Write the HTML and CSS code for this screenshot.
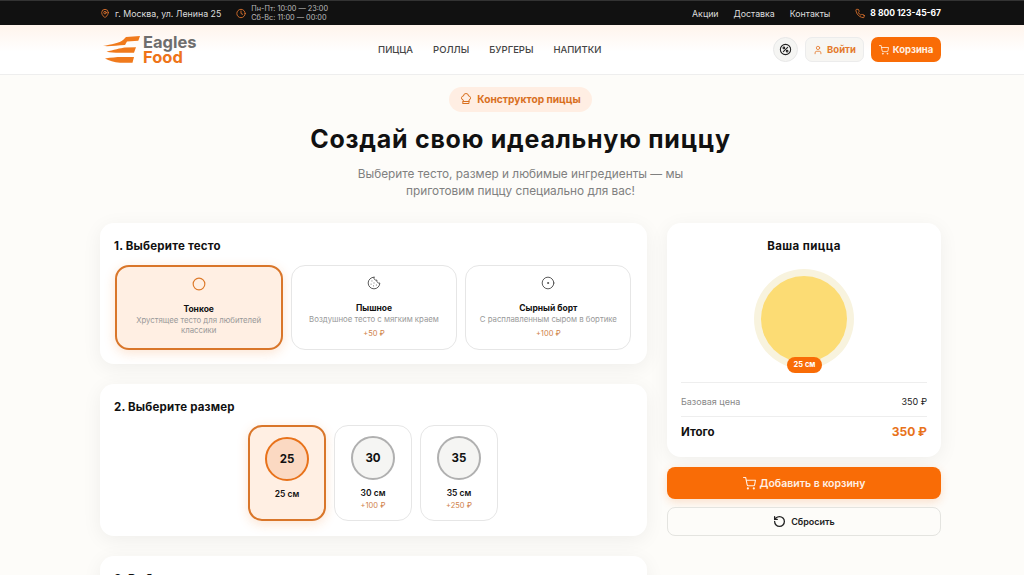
FILE: index.html
```html
<!DOCTYPE html>
<html lang="ru">
<head>
    <meta charset="UTF-8">
    <meta name="viewport" content="width=device-width, initial-scale=1.0">
    <title>Конструктор пиццы - Eagles Food</title>
    <link rel="stylesheet" href="styles.css">
</head>
<body>
    <div class="topbar">
        <div class="wrap topbar-row">
            <div class="topbar-left">
                <span class="top-item">
                    <svg class="top-icon" viewBox="0 0 24 24"><path d="M20 10c0 6-8 12-8 12s-8-6-8-12a8 8 0 0 1 16 0Z"/><circle cx="12" cy="10" r="3"/></svg>
                    г. Москва, ул. Ленина 25
                </span>
                <span class="top-item">
                    <svg class="top-icon" viewBox="0 0 24 24"><circle cx="12" cy="12" r="10"/><path d="M12 6v6l4 2"/></svg>
                    <span class="hours">Пн-Пт: 10:00 — 23:00<br>Сб-Вс: 11:00 — 00:00</span>
                </span>
            </div>
            <div class="topbar-right">
                <a href="#">Акции</a>
                <a href="#">Доставка</a>
                <a href="#">Контакты</a>
                <span class="phone">
                    <svg class="top-icon" viewBox="0 0 24 24"><path d="M22 16.900v3a2 2 0 0 1-2.200 2 19.800 19.800 0 0 1-8.600-3 19.500 19.500 0 0 1-6-6 19.800 19.800 0 0 1-3-8.700A2 2 0 0 1 4.100 2h3a2 2 0 0 1 2 1.700c.1 1 .4 1.900.7 2.800a2 2 0 0 1-.5 2.100L8.100 9.900a16 16 0 0 0 6 6l1.300-1.300a2 2 0 0 1 2.100-.4c.9.300 1.800.6 2.800.7a2 2 0 0 1 1.700 2Z"/></svg>
                    8 800 123-45-67
                </span>
            </div>
        </div>
    </div>

    <header class="header">
        <div class="wrap header-row">
            <a href="#" class="logo">
                <svg class="logo-mark" viewBox="0 0 37 28">
                    <path d="M0 10C8 8.500 17 7 20 4L23 1L37 0L35.300 4.700L24 5.500L22 9C14 9.500 7 10.500 0 10Z"/>
                    <path d="M3.500 15.700C10 14 18 12 22 11.500L33 11.300L31 16.700L20 16.700C14 17 8 16.500 3.500 15.700Z"/>
                    <path d="M2 22.500C8 21.500 14 21 18 21L31 21L29.500 26.700L17 26.700C11 26.700 6 24.500 2 22.500Z"/>
                </svg>
                <span class="logo-text"><span class="logo-top">Eagles</span><span class="logo-bottom">Food</span></span>
            </a>
            <nav class="nav">
                <a href="#">Пицца</a>
                <a href="#">Роллы</a>
                <a href="#">Бургеры</a>
                <a href="#">Напитки</a>
            </nav>
            <div class="header-actions">
                <button class="btn-round">
                    <svg viewBox="0 0 24 24"><circle cx="12" cy="12" r="9.500"/><path d="M16 8l-8 8"/><circle cx="9" cy="9" r="1.500"/><circle cx="15" cy="15" r="1.500"/></svg>
                </button>
                <button class="btn-login">
                    <svg viewBox="0 0 24 24"><path d="M19 21v-2a4 4 0 0 0-4-4H9a4 4 0 0 0-4 4v2"/><circle cx="12" cy="7" r="4"/></svg>
                    Войти
                </button>
                <button class="btn-cart">
                    <svg viewBox="0 0 24 24"><circle cx="9" cy="21" r="1"/><circle cx="20" cy="21" r="1"/><path d="M1 1h4l2.700 13.400a2 2 0 0 0 2 1.600h9.700a2 2 0 0 0 2-1.600L23 6H6"/></svg>
                    Корзина
                </button>
            </div>
        </div>
    </header>

    <main class="wrap">
        <section class="hero">
            <div class="hero-badge">
                <svg viewBox="0 0 24 24"><path d="M6 13.900A4 4 0 0 1 7 6a5 5 0 0 1 10 0 4 4 0 0 1 1 7.900V21H6Z"/><path d="M6 17h12"/></svg>
                Конструктор пиццы
            </div>
            <h1>Создай свою идеальную пиццу</h1>
            <p>Выберите тесто, размер и любимые ингредиенты — мы<br>приготовим пиццу специально для вас!</p>
        </section>

        <div class="builder">
            <div class="steps">
                <section class="card">
                    <h2>1. Выберите тесто</h2>
                    <div class="dough-list">
                        <div class="dough active">
                            <svg viewBox="0 0 24 24"><circle cx="12" cy="12" r="10"/></svg>
                            <div class="dough-name">Тонкое</div>
                            <div class="dough-desc">Хрустящее тесто для любителей классики</div>
                        </div>
                        <div class="dough">
                            <svg viewBox="0 0 24 24"><path d="M12 2a10 10 0 1 0 10 10 4 4 0 0 1-5-5 4 4 0 0 1-5-5"/><path d="M8.500 8.500h.01M16 15.500h.01M12 12h.01M11 17h.01M7 14h.01"/></svg>
                            <div class="dough-name">Пышное</div>
                            <div class="dough-desc">Воздушное тесто с мягким краем</div>
                            <div class="price-add">+50 ₽</div>
                        </div>
                        <div class="dough">
                            <svg viewBox="0 0 24 24"><circle cx="12" cy="12" r="10"/><circle cx="12" cy="12" r="1"/></svg>
                            <div class="dough-name">Сырный борт</div>
                            <div class="dough-desc">С расплавленным сыром в бортике</div>
                            <div class="price-add">+100 ₽</div>
                        </div>
                    </div>
                </section>

                <section class="card">
                    <h2>2. Выберите размер</h2>
                    <div class="size-list">
                        <div class="size active">
                            <div class="size-circle">25</div>
                            <div class="size-name">25 см</div>
                        </div>
                        <div class="size">
                            <div class="size-circle">30</div>
                            <div class="size-name">30 см</div>
                            <div class="price-add">+100 ₽</div>
                        </div>
                        <div class="size">
                            <div class="size-circle">35</div>
                            <div class="size-name">35 см</div>
                            <div class="price-add">+250 ₽</div>
                        </div>
                    </div>
                </section>

                <section class="card">
                    <h2>3. Выберите ингредиенты</h2>
                </section>
            </div>

            <aside class="side">
                <section class="card summary">
                    <h2>Ваша пицца</h2>
                    <div class="pizza">
                        <div class="pizza-base"></div>
                        <span class="pizza-size">25 см</span>
                    </div>
                    <div class="price-row">
                        <span>Базовая цена</span>
                        <span class="price-value">350 ₽</span>
                    </div>
                    <div class="total-row">
                        <span>Итого</span>
                        <span class="total-value">350 ₽</span>
                    </div>
                </section>
                <button class="btn-add">
                    <svg viewBox="0 0 24 24"><circle cx="9" cy="21" r="1"/><circle cx="20" cy="21" r="1"/><path d="M1 1h4l2.700 13.400a2 2 0 0 0 2 1.600h9.700a2 2 0 0 0 2-1.600L23 6H6"/></svg>
                    Добавить в корзину
                </button>
                <button class="btn-reset">
                    <svg viewBox="0 0 24 24"><path d="M3 12a9 9 0 1 0 9-9 9.800 9.800 0 0 0-6.700 2.700L3 8"/><path d="M3 3v5h5"/></svg>
                    Сбросить
                </button>
            </aside>
        </div>
    </main>
</body>
</html>
```

FILE: styles.css
```css
* {
    box-sizing: border-box;
}
html, body {
    height: 575px;
    overflow: hidden;
}
body {
    margin: 0;
    font-family: Inter, "Noto Sans", sans-serif;
    background-color: #fdfcf9;
    color: #111;
}
svg {
    fill: none;
    stroke: currentColor;
    stroke-width: 2;
    stroke-linecap: round;
    stroke-linejoin: round;
}
a {
    color: inherit;
    text-decoration: none;
}
button {
    font-family: inherit;
    cursor: pointer;
}
.wrap {
    width: 841px;
    margin-left: 100px;
}

/* top bar */
.topbar {
    height: 25px;
    background: #111;
    border-top: 1px solid #333;
    color: #ddd;
    font-size: 8.800px;
}
.topbar-row, .topbar-left, .top-item, .topbar-right, .phone {
    display: flex;
    align-items: center;
}
.topbar-row {
    height: 24px;
    justify-content: space-between;
}
.topbar-left {
    gap: 15px;
}
.top-item {
    gap: 5px;
}
.top-icon {
    width: 10px;
    height: 11px;
    color: #e8772e;
    flex: none;
}
.hours {
    font-size: 7.300px;
    line-height: 9.500px;
    color: #bbb;
}
.topbar-right {
    gap: 15px;
}
.phone {
    gap: 5px;
    margin-left: 10px;
    color: #fff;
    font-size: 8.500px;
    font-weight: 700;
}

/* header */
.header {
    height: 50px;
    background: linear-gradient(180deg, #fff4ec 0%, #fff 55%);
    border-bottom: 1px solid #eee;
}
.header-row {
    height: 49px;
    display: flex;
    align-items: center;
    justify-content: space-between;
}
.logo {
    display: flex;
    align-items: center;
    gap: 3px;
    margin-left: 3px;
}
.logo-mark {
    width: 37px;
    height: 28px;
    fill: #f07a1c;
    stroke: none;
}
.logo-text {
    display: flex;
    flex-direction: column;
    font-size: 16.500px;
    line-height: 15px;
    font-weight: 700;
}
.logo-top {
    color: #6e6e6e;
}
.logo-bottom {
    color: #ee7419;
}
.nav {
    display: flex;
    gap: 20px;
    margin-left: 10px;
    font-size: 9.500px;
    font-weight: 500;
    text-transform: uppercase;
    color: #444;
}
.header-actions {
    display: flex;
    align-items: center;
    gap: 6px;
}
.btn-round {
    width: 25px;
    height: 25px;
    padding: 5px;
    border: 1px solid #e8e8e8;
    border-radius: 50%;
    background: #f5f5f3;
    color: #222;
    margin-right: 1px;
}
.btn-round svg {
    display: block;
    width: 13px;
    height: 13px;
}
.btn-login, .btn-cart {
    display: flex;
    align-items: center;
    justify-content: center;
    height: 25px;
    gap: 4px;
    border-radius: 7px;
    font-size: 9.500px;
    font-weight: 700;
    padding: 0;
}
.btn-login svg, .btn-cart svg {
    width: 10px;
    height: 10px;
}
.btn-login {
    width: 59px;
    background: #f7f6f3;
    border: 1px solid #ececec;
    color: #e47a2c;
}
.btn-cart {
    width: 70px;
    background: #f96c06;
    border: none;
    color: #fff0e4;
    margin-left: 1px;
}

/* hero */
.hero {
    text-align: center;
    padding-top: 12px;
}
.hero-badge {
    display: flex;
    align-items: center;
    gap: 5px;
    width: fit-content;
    height: 25px;
    margin: 0 auto;
    padding: 0 11px 2px;
    border-radius: 13px;
    background: #ffeee3;
    color: #d9701f;
    font-size: 10.200px;
    font-weight: 700;
}
.hero-badge svg {
    width: 12px;
    height: 12px;
}
.hero h1 {
    margin: 12px 0 0;
    font-size: 25px;
    line-height: 31px;
    font-weight: 700;
    letter-spacing: 0.750px;
    color: #111;
}
.hero p {
    margin: 11px 0 0;
    font-size: 11.800px;
    line-height: 17px;
    color: #808080;
}

/* builder */
.builder {
    display: grid;
    grid-template-columns: 547px 274px;
    gap: 20px;
    margin-top: 23px;
}
.steps {
    display: flex;
    flex-direction: column;
    gap: 20px;
}
.card {
    background: #fff;
    border-radius: 14px;
    padding: 15px 14px 14px;
    box-shadow: 0 4px 20px rgba(0,0,0,0.06);
}
.card h2 {
    margin: 0 0 11px;
    font-size: 11.500px;
    line-height: 16px;
    font-weight: 700;
    letter-spacing: 0.200px;
    color: #111;
}
.dough-list {
    display: flex;
    gap: 8px;
    width: 517px;
    margin-left: 0.500px;
}
.dough {
    flex: 1;
    height: 85px;
    padding: 10px 8px 0;
    border: 1.500px solid #e6e6e6;
    border-radius: 14px;
    background: #fff;
    text-align: center;
}
.dough svg {
    display: block;
    width: 14px;
    height: 14px;
    margin: 0 auto 13px;
    color: #444;
    stroke-width: 1.500;
}
.dough.active, .size.active {
    border: 2px solid #d9762a;
    background: #ffefe3;
    box-shadow: 0 3px 12px rgba(240,120,30,0.2);
}
.dough.active svg {
    color: #dd7a2b;
    stroke-width: 2;
}
.dough-name {
    font-size: 8.500px;
    line-height: 10px;
    font-weight: 700;
    color: #111;
}
.dough-desc {
    margin-top: 2px;
    font-size: 7.800px;
    line-height: 9.500px;
    color: #999;
}
.price-add {
    margin-top: 4px;
    font-size: 7.500px;
    line-height: 10px;
    color: #d0824a;
}
.size-list {
    display: flex;
    justify-content: center;
    gap: 8px;
    margin: -1px 0 1px;
    padding-right: 1px;
}
.size {
    width: 78px;
    height: 96px;
    padding-top: 9.500px;
    border: 1.500px solid #e6e6e6;
    border-radius: 14px;
    background: #fff;
    text-align: center;
}
.size-circle {
    width: 44px;
    height: 44px;
    margin: 0 auto 8px;
    border: 2.500px solid #b0b0b0;
    border-radius: 50%;
    background: #f5f5f3;
    font-size: 11.500px;
    font-weight: 700;
    line-height: 41px;
}
.size.active .size-circle {
    border-color: #e8721a;
    background: #fbd9c2;
}
.size-name {
    font-size: 8.500px;
    line-height: 11px;
    font-weight: 600;
}
.size .price-add {
    margin-top: 2px;
}

/* summary */
.side {
    display: flex;
    flex-direction: column;
}
.summary {
    height: 234px;
}
.summary h2 {
    text-align: center;
    margin-bottom: 15px;
    letter-spacing: 0.400px;
}
.pizza {
    position: relative;
    width: 100px;
    height: 100px;
    margin: 0 auto 13px;
    padding: 7px;
    border-radius: 50%;
    background: #f8f3de;
}
.pizza-base {
    width: 86px;
    height: 86px;
    border-radius: 50%;
    background: #fcdc74;
}
.pizza-size {
    position: absolute;
    left: 33px;
    top: 88px;
    width: 35px;
    height: 16px;
    border-radius: 8px;
    background: #f96c06;
    color: #fff;
    font-size: 7.500px;
    font-weight: 700;
    line-height: 16px;
    text-align: center;
}
.price-row, .total-row {
    display: flex;
    justify-content: space-between;
    align-items: center;
    border-top: 1px solid #eee;
}
.price-row {
    height: 34px;
    padding-top: 3px;
    font-size: 9px;
    color: #888;
}
.price-value {
    color: #222;
}
.total-row {
    height: 30px;
    font-size: 11.500px;
    font-weight: 700;
}
.total-value {
    font-size: 12px;
    color: #e8721a;
}
.btn-add, .btn-reset {
    display: flex;
    align-items: center;
    justify-content: center;
    width: 274px;
    padding: 0;
}
.btn-add {
    height: 32px;
    margin-top: 10px;
    gap: 4px;
    border: none;
    border-radius: 8px;
    background: #f96c06;
    color: #fff0e4;
    font-size: 10.500px;
    font-weight: 600;
    box-shadow: 0 3px 10px rgba(240,110,20,0.2);
}
.btn-add svg {
    width: 13px;
    height: 13px;
}
.btn-reset {
    height: 29px;
    margin-top: 8px;
    gap: 5px;
    border: 1px solid #e4e4e0;
    border-radius: 8px;
    background: #fdfcf9;
    color: #222;
    font-size: 9px;
    font-weight: 600;
}
.btn-reset svg {
    width: 13px;
    height: 13px;
    stroke-width: 2.400;
}
```
